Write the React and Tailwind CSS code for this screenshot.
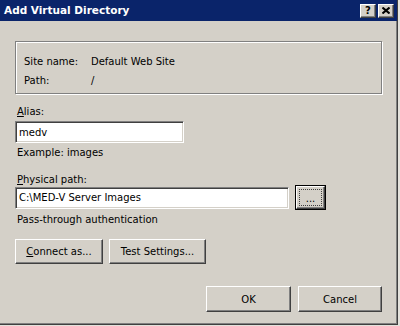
import React from "react";

const font = { fontFamily: '"DejaVu Sans", Tahoma, sans-serif' };

const raised =
  "border border-t-white border-l-white border-r-[#404040] border-b-[#404040] shadow-[inset_-1px_-1px_0_#808080] bg-[#d4d0c8]";
const sunken =
  "border border-t-[#808080] border-l-[#808080] border-r-white border-b-white shadow-[inset_1px_1px_0_#404040,inset_-1px_-1px_0_#d4d0c8] bg-white";

const Button = ({ className = "", children }) => (
  <button
    className={`${raised} flex items-center justify-center text-[10px] text-black h-[25px] ${className}`}
  >
    {children}
  </button>
);

const TextBox = ({ value, className = "" }) => (
  <div className={`${sunken} h-[22px] flex items-center pl-[3px] text-[10px] text-black ${className}`}>
    {value}
  </div>
);

export default function App() {
  return (
    <div className="w-[400px] h-[326px] bg-[#e4e2dc]" style={font}>
      <div className="w-[398px] h-[325px] bg-[#d4d0c8] flex flex-col border-r border-b border-r-[#404040] border-b-[#404040] shadow-[inset_-1px_-1px_0_#808080]">
        {/* title bar */}
        <div className="h-[21px] bg-[#0a246a] flex items-center justify-between pl-[4px] pr-[3px]">
          <span className="text-white font-bold text-[10.5px]">Add Virtual Directory</span>
          <div className="flex gap-[2px]">
            <div className={`${raised} w-[16px] h-[14px] flex items-center justify-center text-[10px] font-bold text-black leading-none`}>
              ?
            </div>
            <div className={`${raised} w-[16px] h-[14px] flex items-center justify-center`}>
              <svg width="8" height="7" viewBox="0 0 8 7">
                <path d="M0.5 0.5 L7.5 6.5 M7.5 0.5 L0.5 6.5" stroke="#000" strokeWidth="2" />
              </svg>
            </div>
          </div>
        </div>

        <div className="flex flex-col px-[15px] text-[10px] text-black">
          {/* site info group */}
          <div className="mt-[20px] h-[53px] border border-[#808080] shadow-[1px_1px_0_#fff,inset_1px_1px_0_#fff] pt-[10px] pl-[8px]">
            <div className="flex h-[19px] items-center">
              <span className="w-[67px]">Site name:</span>
              <span>Default Web Site</span>
            </div>
            <div className="flex h-[19px] items-center">
              <span className="w-[67px]">Path:</span>
              <span>/</span>
            </div>
          </div>

          <div className="mt-[11px] h-[14px] leading-[14px] pl-[2px]">
            <u>A</u>lias:
          </div>
          <TextBox value="medv" className="mt-[2px] w-[169px]" />
          <div className="mt-[3px] h-[14px] leading-[14px] pl-[2px]">Example: images</div>

          <div className="mt-[13px] h-[14px] leading-[14px] pl-[2px]">
            <u>P</u>hysical path:
          </div>
          <div className="-mt-[2px] flex items-center gap-[6px] h-[25px]">
            <TextBox value="C:\MED-V Server Images" className="w-[274px]" />
            <div className="w-[31px] h-[25px] border border-black">
              <div className={`${raised} w-full h-full p-[2px]`}>
                <div className="w-full h-full border border-dotted border-[#404040] flex items-end justify-center leading-[12px] text-[10px]">
                  ...
                </div>
              </div>
            </div>
          </div>

          <div className="mt-[3px] h-[14px] leading-[14px] pl-[2px]">Pass-through authentication</div>

          <div className="mt-[12px] flex gap-[6px]">
            <Button className="w-[88px]">
              <span>
                <u>C</u>onnect as...
              </span>
            </Button>
            <Button className="w-[97px]">Test Settings...</Button>
          </div>

          <div className="mt-[22px] flex justify-end gap-[7px]">
            <Button className="w-[85px] h-[26px]">OK</Button>
            <Button className="w-[84px] h-[26px]">Cancel</Button>
          </div>
        </div>
      </div>
    </div>
  );
}
